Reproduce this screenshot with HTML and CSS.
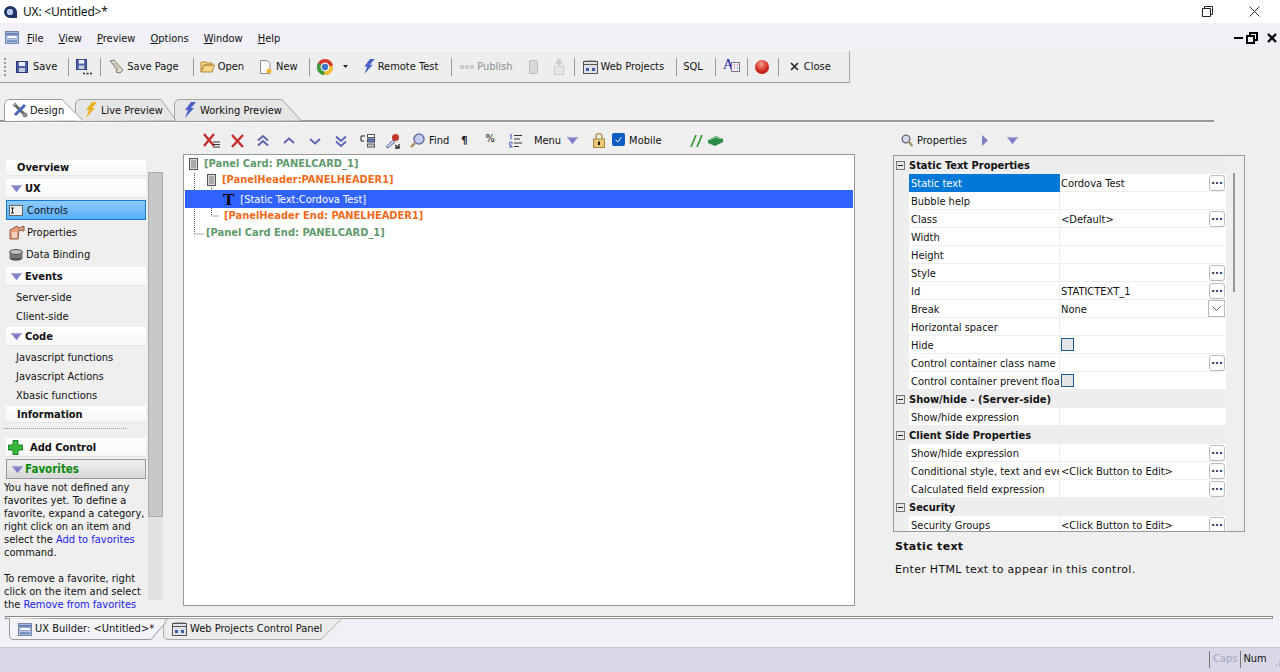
FILE: index.html
```html
<!DOCTYPE html>
<html lang="en">
<head>
<meta charset="UTF-8">
<title>UX: &lt;Untitled&gt;*</title>
<link rel="stylesheet" href="styles.css">
</head>
<body>
<svg class="defs" width="0" height="0">
	<symbol id="tri" viewBox="0 0 11 7"><path d="M0 0H11L5.5 7Z" fill="#7c7cc4" stroke="#9a9ad8" stroke-width=".5"/><path d="M1.5 .8H9.5" stroke="#b4b4e4"/></symbol>
	<symbol id="web" viewBox="0 0 15 14"><rect x=".5" y="1.5" width="14" height="12" fill="#dfe2ea" stroke="#555"/><path d="M1 4.5H14" stroke="#555"/><path d="M3 1V0H7V1M8 1V0H12V1" fill="none" stroke="#888"/><rect x="3" y="8" width="3" height="3" fill="#3c5ca8"/><rect x="9" y="8" width="3" height="3" fill="#3c5ca8"/></symbol>
	<symbol id="ux" viewBox="0 0 15 14"><rect x=".5" y=".5" width="14" height="13" fill="#b7c6e6" stroke="#6f80a8"/><path d="M1 3H14" stroke="#5e78b4" stroke-width="2"/><rect x="2" y="5" width="11" height="3" fill="#fff" stroke="#7486b4" stroke-width=".7"/><path d="M2 11H13" stroke="#6c84bc" stroke-width="2"/></symbol>
	<symbol id="save" viewBox="0 0 12 12"><rect x=".5" y=".5" width="11" height="11" fill="#4a5fa8" stroke="#2a3a78"/><rect x="3" y="1" width="6" height="4" fill="#eef"/><rect x="3" y="7" width="6" height="4" fill="#c8cce0"/></symbol>
	<symbol id="bolt" viewBox="0 0 12 16"><path d="M7 0H12L7 6H10L1 16L4 8H1Z"/></symbol>
	<symbol id="panel" viewBox="0 0 9 12"><rect x=".5" y=".5" width="8" height="11" fill="#d8d8d8" stroke="#555"/><rect x="2" y="2" width="5" height="8" fill="#aaa"/></symbol>
</svg>

<div class="titlebar">
	<svg class="app-logo" width="14" height="12" viewBox="0 0 14 12"><path fill-rule="evenodd" d="M7 0A6 6 0 1 0 7 12H14V6A7 6 0 0 0 7 0ZM7 3A3 3 0 1 1 7 9A3 3 0 1 1 7 3Z" fill="#1c3468"/><circle cx="7" cy="6" r="3" fill="#b8c8e8"/></svg>
	<span class="title">UX: &lt;Untitled&gt;*</span>
	<svg class="win-restore" width="11" height="11" viewBox="0 0 11 11"><path d="M2.5 2.5V.5H10.500V8.500H8.500M.5 2.500H8.500V10.500H.5Z" fill="none" stroke="#222"/></svg>
	<svg class="win-close" width="11" height="11" viewBox="0 0 11 11"><path d="M.5 .5L10.500 10.500M10.500 .5L.5 10.500" stroke="#333"/></svg>
</div>

<div class="menubar">
	<svg class="menu-icon" width="14" height="13"><use href="#ux"/></svg>
	<span class="menu-item"><u>F</u>ile</span>
	<span class="menu-item"><u>V</u>iew</span>
	<span class="menu-item"><u>P</u>review</span>
	<span class="menu-item"><u>O</u>ptions</span>
	<span class="menu-item"><u>W</u>indow</span>
	<span class="menu-item"><u>H</u>elp</span>
	<div class="mdi-btns">
		<span class="mdi-min"></span>
		<svg width="12" height="12" viewBox="0 0 12 12"><path d="M4 3V1H11V8H8.500M1 4H8V11H1Z" fill="none" stroke="#000" stroke-width="2"/></svg>
		<svg class="mdi-x" width="10" height="10" viewBox="0 0 10 10"><path d="M1 1L9 9M9 1L1 9" stroke="#000" stroke-width="2.400"/></svg>
	</div>
</div>

<div class="toolbar">
	<span class="grip"></span>
	<span class="tool t-save"><svg width="12" height="12"><use href="#save"/></svg>Save</span>
	<span class="sep"></span>
	<span class="tool t-saveas"><svg width="16" height="16" viewBox="0 0 16 16"><use href="#save" width="11" height="11"/><path d="M7 14.500H9M10.500 14.500H12.500M14 14.500H16" stroke="#223" stroke-width="1.500"/></svg></span>
	<span class="sep"></span>
	<span class="tool t-page"><svg width="15" height="15" viewBox="0 0 15 15"><path d="M1 2L5 1L14 11L11 14L7 13L8 11L3 4Z" fill="#e4e0d0" stroke="#77756a"/><path d="M5 4L10 10M4 6L9 12" stroke="#99978a"/></svg>Save Page</span>
	<span class="sep"></span>
	<span class="tool t-open"><svg width="15" height="13" viewBox="0 0 15 13"><path d="M1 12V2H6L7 3H12V5H4L1 12L4 5H14.500L12 12Z" fill="#f4d68a" stroke="#b08a38"/></svg>Open</span>
	<span class="tool t-new"><svg width="12" height="14" viewBox="0 0 12 14"><path d="M.5 .5H7L10 3.500V13.500H.5Z" fill="#fafafa" stroke="#8a8a98"/><circle cx="9" cy="11" r="2.500" fill="#f0b830"/></svg>New</span>
	<span class="sep"></span>
	<span class="tool t-chrome"><svg width="16" height="16" viewBox="0 0 16 16"><circle cx="8" cy="8" r="8" fill="#d9342c"/><path d="M8 8L15.900 6.800A8 8 0 0 1 7 16Z" fill="#f4c430"/><path d="M8 8L7 16A8 8 0 0 1 1 3.800Z" fill="#3c9c3c"/><circle cx="8" cy="8" r="3.800" fill="#3f76c8" stroke="#eee" stroke-width="1.300"/></svg></span>
	<svg class="caret" width="5" height="3" viewBox="0 0 5 3"><path d="M0 0H5L2.500 3Z" fill="#222"/></svg>
	<span class="tool t-remote"><svg class="bolt-blue" width="12" height="15"><use href="#bolt"/></svg>Remote Test</span>
	<span class="sep"></span>
	<span class="tool t-publish off"><span class="dots3"></span>Publish</span>
	<svg class="t-phone" width="9" height="14" viewBox="0 0 9 14"><rect x=".5" y=".5" width="8" height="13" rx="1.500" fill="#d8d8d8" stroke="#bbb"/></svg>
	<svg class="t-upl" width="10" height="16" viewBox="0 0 10 16"><path d="M3 0H7V3H9L5 7L1 3H3Z" fill="#ccc"/><rect x=".5" y="7.500" width="9" height="8" fill="#e6e6e6" stroke="#ccc"/></svg>
	<span class="sep"></span>
	<span class="tool t-web"><svg width="15" height="14"><use href="#web"/></svg>Web Projects</span>
	<span class="sep"></span>
	<span class="tool t-sql">SQL</span>
	<span class="sep"></span>
	<span class="tool t-style"><span class="big-a">A</span><svg width="9" height="10" viewBox="0 0 9 10"><rect x=".5" y=".5" width="8" height="9" fill="#eef" stroke="#778"/><path d="M3 3H4M6 3H7M3 6H4" stroke="#d33"/><path d="M6 6H7" stroke="#2a4"/></svg></span>
	<span class="sep"></span>
	<span class="ball"></span>
	<span class="sep"></span>
	<span class="tool t-close"><svg width="9" height="9" viewBox="0 0 9 9"><path d="M1 1L8 8M8 1L1 8" stroke="#222" stroke-width="1.600"/></svg>Close</span>
</div>

<div class="tabstrip">
	<div class="tab tab-design">
		<svg class="tab-bg" width="80" height="22" viewBox="0 0 80 22"><path d="M.5 22V6Q.5 .5 6 .5H58L79 21.500" fill="#fff" stroke="#9a9a9a"/></svg>
		<svg class="tab-ic" width="16" height="16" viewBox="0 0 16 16"><path d="M3 3L13 13" stroke="#666" stroke-width="3"/><path d="M13 3L3 13" stroke="#4766b8" stroke-width="3"/><path d="M1 4L4 1" stroke="#999" stroke-width="2"/><circle cx="13" cy="13" r="2.500" fill="#888"/></svg><span>Design</span>
	</div>
	<div class="tab tab-live">
		<svg class="tab-bg" width="102" height="22" viewBox="0 0 102 22"><path d="M.5 22V6Q.5 .5 6 .5H86L101 21.500" fill="#e6e6e6" stroke="#a4a4a4"/></svg>
		<svg class="tab-ic bolt-yellow" width="12" height="16"><use href="#bolt"/></svg><span>Live Preview</span>
	</div>
	<div class="tab tab-working">
		<svg class="tab-bg" width="128" height="22" viewBox="0 0 128 22"><path d="M.5 22V6Q.5 .5 6 .5H108L127 21.500" fill="#e6e6e6" stroke="#a4a4a4"/></svg>
		<svg class="tab-ic bolt-blue" width="12" height="16"><use href="#bolt"/></svg><span>Working Preview</span>
	</div>
</div>

<div class="main">
	<div class="left">
		<div class="nav">
			<div class="nav-head h-over">Overview</div>
			<div class="nav-head h-tall"><svg width="11" height="7"><use href="#tri"/></svg>UX</div>
			<div class="nav-sel"><svg width="14" height="11" viewBox="0 0 14 11"><rect x=".5" y=".5" width="13" height="10" fill="#eee" stroke="#666"/><path d="M2 3H5M2 8H5M3.500 3V8" stroke="#222"/></svg>Controls</div>
			<div class="nav-item ic-props"><svg width="16" height="15" viewBox="0 0 16 15"><path d="M1 5L8 1L10 3L15 1V6L10 5L9 14H1Z" fill="#e8a078" stroke="#885c50"/><path d="M3 8H8M3 10H8M3 12H8" stroke="#fff"/></svg>Properties</div>
			<div class="nav-item ic-data"><svg width="14" height="12" viewBox="0 0 14 12"><ellipse cx="7" cy="9" rx="6.500" ry="2.800" fill="#555"/><rect x=".5" y="3" width="13" height="6" fill="#777"/><ellipse cx="7" cy="3" rx="6.500" ry="2.500" fill="#bbb" stroke="#555"/></svg>Data Binding</div>
			<div class="nav-head h-tall"><svg width="11" height="7"><use href="#tri"/></svg>Events</div>
			<div class="nav-link first">Server-side</div>
			<div class="nav-link">Client-side</div>
			<div class="nav-head h-tall"><svg width="11" height="7"><use href="#tri"/></svg>Code</div>
			<div class="nav-link first">Javascript functions</div>
			<div class="nav-link">Javascript Actions</div>
			<div class="nav-link">Xbasic functions</div>
			<div class="nav-head h-over h-info">Information</div>
			<div class="dotted"></div>
			<div class="nav-head h-add"><svg width="15" height="15" viewBox="0 0 15 15"><path d="M5 .5H10V5H14.500V10H10V14.500H5V10H.5V5H5Z" fill="#38b838" stroke="#1c7c2c"/></svg>Add Control</div>
			<div class="nav-fav"><svg width="11" height="7"><use href="#tri"/></svg>Favorites</div>
			<p class="fav-text">You have not defined any<br>favorites yet. To define a<br>favorite, expand a category,<br>right click on an item and<br>select the <span class="link">Add to favorites</span><br>command.</p>
			<p class="fav-text fav-gap">To remove a favorite, right<br>click on the item and select<br>the <span class="link">Remove from favorites</span></p>
		</div>
		<div class="nav-scroll"><div class="nav-thumb"></div></div>
	</div>

	<div class="center">
		<div class="edit-tools">
			<svg class="e1" width="17" height="16" viewBox="0 0 17 16"><path d="M1 1L11 13M11 1L1 13" stroke="#c4302c" stroke-width="2.400"/><path d="M10 9H17M10 11.500H17M10 14H17" stroke="#333"/></svg>
			<svg class="e2" width="13" height="14" viewBox="0 0 13 14"><path d="M1 1L12 13M12 1L1 13" stroke="#c4302c" stroke-width="2.400"/></svg>
			<svg class="e3" width="12" height="12" viewBox="0 0 12 12"><path d="M1 5.500L6 1L11 5.500M1 10.500L6 6L11 10.500" fill="none" stroke="#5c62b4" stroke-width="1.800"/></svg>
			<svg class="e3" width="12" height="12" viewBox="0 0 12 12"><path d="M1 8L6 3.500L11 8" fill="none" stroke="#5c62b4" stroke-width="1.800"/></svg>
			<svg class="e3" width="12" height="12" viewBox="0 0 12 12"><path d="M1 4L6 8.500L11 4" fill="none" stroke="#5c62b4" stroke-width="1.800"/></svg>
			<svg class="e3" width="12" height="12" viewBox="0 0 12 12"><path d="M1 1.500L6 6L11 1.500M1 6.500L6 11L11 6.500" fill="none" stroke="#5c62b4" stroke-width="1.800"/></svg>
			<svg class="e4" width="15" height="14" viewBox="0 0 15 14"><rect x="7.500" y=".5" width="7" height="3" fill="#fff" stroke="#555"/><rect x="7.500" y="5" width="7" height="3" fill="#5c7cc4" stroke="#446"/><rect x="7.500" y="10" width="7" height="3" fill="#ccc" stroke="#555"/><path d="M5 2H1V7H4" fill="none" stroke="#222"/></svg>
			<svg class="e5" width="16" height="16" viewBox="0 0 16 16"><path d="M2 14L9 7L11 9L4 15Z" fill="#cbd4ec" stroke="#5a6aa0"/><circle cx="11.500" cy="4.500" r="3.500" fill="#c4382c"/><path d="M11 12L15 15M15 11V15H11" fill="none" stroke="#222" stroke-width="1.300"/></svg>
			<svg class="e6" width="15" height="15" viewBox="0 0 15 15"><circle cx="9" cy="6" r="5" fill="#c4ccec" stroke="#6670a8" stroke-width="1.500"/><path d="M5 10L1 14" stroke="#a88858" stroke-width="2.400"/></svg>
			<span class="e-text e-find">Find</span>
			<span class="e-pil">¶</span>
			<span class="e-pct">%</span>
			<svg class="e-list" width="14" height="14" viewBox="0 0 14 14"><path d="M2 1L3 .5V5.500M1 13H4L1.500 10Q1.500 8 3 8T4 10" fill="none" stroke="#5c6cc8" stroke-width="1.200"/><path d="M6 1.500H14M6 5H12M6 9H14M6 12.500H11" stroke="#333"/></svg>
			<span class="e-text e-menu">Menu</span>
			<svg class="e-tri" width="11" height="7"><use href="#tri"/></svg>
			<svg class="e-lock" width="12" height="15" viewBox="0 0 12 15"><path d="M3 6V3.500A3 3 0 0 1 9 3.500V6" fill="none" stroke="#b89850" stroke-width="1.500"/><rect x=".5" y="6" width="11" height="8.500" fill="#eac878" stroke="#a88838"/><rect x="5" y="8.500" width="2" height="3.500" fill="#222"/></svg>
			<span class="e-check"><svg width="13" height="13" viewBox="0 0 13 13"><path d="M3.500 6.500L5.800 9L9.500 4" fill="none" stroke="#fff"/></svg></span>
			<span class="e-text e-mobile">Mobile</span>
			<svg class="e-slash" width="13" height="12" viewBox="0 0 13 12"><path d="M1 12L6 0M7 12L12 0" stroke="#2a9a28" stroke-width="1.600"/></svg>
			<svg class="e-book" width="15" height="10" viewBox="0 0 15 10"><path d="M0 4L8 0L15 3V6L7 10L0 7Z" fill="#2f8a48"/><path d="M1 4L8 1L13 3" fill="none" stroke="#a4dcb0"/></svg>
		</div>
		<div class="tree">
			<svg class="tree-lines" width="60" height="90" viewBox="0 0 60 90"><path d="M9.500 17V78H19M26.500 32V60H34" fill="none" stroke="#555" stroke-dasharray="1 1"/></svg>
			<div class="row row-card first-row"><svg width="9" height="12"><use href="#panel"/></svg>[Panel Card: PANELCARD_1]</div>
			<div class="row row-head ind-head"><svg width="9" height="12"><use href="#panel"/></svg>[PanelHeader:PANELHEADER1]</div>
			<div class="row row-sel"><span class="big-t">T</span>[Static Text:Cordova Test]</div>
			<div class="row row-head ind-head-end">[PanelHeader End: PANELHEADER1]</div>
			<div class="row row-card ind-card-end">[Panel Card End: PANELCARD_1]</div>
		</div>
	</div>

	<div class="right">
		<div class="prop-tools">
			<svg width="12" height="13" viewBox="0 0 12 13"><circle cx="5" cy="5" r="3.800" fill="#d4dcec" stroke="#667" stroke-width="1.300"/><path d="M8 8L11.500 12" stroke="#a88858" stroke-width="2"/></svg>
			<span class="p-label">Properties</span>
			<svg class="p-right" width="6" height="11" viewBox="0 0 6 11"><path d="M0 0L6 5.500L0 11Z" fill="#7c7cc4"/></svg>
			<svg class="p-down" width="11" height="7"><use href="#tri"/></svg>
		</div>
		<div class="props">
			<div class="prop-list">
				<div class="group"><span class="minus"></span>Static Text Properties</div>
				<div class="prop"><span class="name name-sel">Static text</span><span class="val">Cordova Test</span><span class="more">...</span></div>
				<div class="prop"><span class="name">Bubble help</span><span class="val"></span></div>
				<div class="prop"><span class="name">Class</span><span class="val">&lt;Default&gt;</span><span class="more">...</span></div>
				<div class="prop"><span class="name">Width</span><span class="val"></span></div>
				<div class="prop"><span class="name">Height</span><span class="val"></span></div>
				<div class="prop"><span class="name">Style</span><span class="val"></span><span class="more">...</span></div>
				<div class="prop"><span class="name">Id</span><span class="val">STATICTEXT_1</span><span class="more">...</span></div>
				<div class="prop"><span class="name">Break</span><span class="val">None</span><span class="drop"><svg width="9" height="5" viewBox="0 0 9 5"><path d="M.5 .5L4.500 4.500L8.500 .5" fill="none" stroke="#555"/></svg></span></div>
				<div class="prop"><span class="name">Horizontal spacer</span><span class="val"></span></div>
				<div class="prop"><span class="name">Hide</span><span class="val"><span class="box"></span></span></div>
				<div class="prop"><span class="name">Control container class name</span><span class="val"></span><span class="more">...</span></div>
				<div class="prop"><span class="name">Control container prevent float</span><span class="val"><span class="box"></span></span></div>
				<div class="group"><span class="minus"></span>Show/hide - (Server-side)</div>
				<div class="prop"><span class="name">Show/hide expression</span><span class="val"></span></div>
				<div class="group"><span class="minus"></span>Client Side Properties</div>
				<div class="prop"><span class="name">Show/hide expression</span><span class="val"></span><span class="more">...</span></div>
				<div class="prop"><span class="name">Conditional style, text and events</span><span class="val">&lt;Click Button to Edit&gt;</span><span class="more">...</span></div>
				<div class="prop"><span class="name">Calculated field expression</span><span class="val"></span><span class="more">...</span></div>
				<div class="group"><span class="minus"></span>Security</div>
				<div class="prop"><span class="name">Security Groups</span><span class="val">&lt;Click Button to Edit&gt;</span><span class="more">...</span></div>
			</div>
			<div class="prop-scroll"><div class="prop-thumb"></div></div>
		</div>
		<div class="help">
			<div class="help-title">Static text</div>
			<div class="help-text">Enter HTML text to appear in this control.</div>
		</div>
	</div>
</div>

<div class="doc-tabs">
	<div class="doc-line"></div>
	<div class="doc-row">
		<div class="doc-tab doc-active">
			<svg class="tab-bg" width="158" height="22" viewBox="0 0 158 22"><path d="M.5 0V17Q.5 21.500 5 21.500H142L157 4" fill="#f4f4f8" stroke="#999"/></svg>
			<svg width="14" height="13"><use href="#ux"/></svg><span>UX Builder: &lt;Untitled&gt;*</span>
		</div>
		<div class="doc-tab doc-other">
			<svg class="tab-bg" width="180" height="22" viewBox="0 0 180 22"><path d="M.5 8Q.5 .5 8 .5H179L158 21.500H5Q.5 21.500 .5 17Z" fill="#ececec" stroke="#aaa"/></svg>
			<svg width="15" height="14"><use href="#web"/></svg><span>Web Projects Control Panel</span>
		</div>
	</div>
</div>

<div class="statusbar">
	<span class="st-sep"></span><span class="st-caps">Caps</span>
	<span class="st-sep"></span><span class="st-num">Num</span>
	<svg class="st-grip" width="10" height="10" viewBox="0 0 10 10"><path d="M8 1H10M5 4H7M8 4H10M2 7H4M5 7H7M8 7H10" stroke="#888" stroke-dasharray="1 1"/></svg>
</div>
</body>
</html>
```

FILE: styles.css
```css
* {
	box-sizing: border-box;
}

html, body {
	margin: 0;
	height: 672px;
	overflow: hidden;
}

body {
	background: #efefef;
	color: #111;
	font-family: "DejaVu Sans Condensed", "Noto Sans", sans-serif;
	font-size: 11px;
	line-height: 14px;
}

svg {
	display: block;
	flex: none;
}

.defs {
	position: absolute;
}

.bolt-blue { color: #4a62c8; fill: #4a62c8; }
.bolt-yellow { color: #e8b020; fill: #e8b020; }

/* window title */
.titlebar {
	display: flex;
	align-items: center;
	height: 23px;
	padding-left: 3px;
	background: #fff;
}

.title {
	margin-left: 6px;
	font-family: "Noto Sans", sans-serif;
	font-size: 12px;
	letter-spacing: -.2px;
}

.win-restore {
	margin-left: auto;
}

.win-close {
	margin: 0 20px 0 36px;
}

/* menu */
.menubar {
	display: flex;
	align-items: center;
	height: 28px;
	padding: 0 3px 0 5px;
	background: #f0f0f6;
}

.menu-item {
	margin-left: 9px;
	margin-right: 6px;
	padding-top: 3px;
}

.menu-icon + .menu-item {
	margin-left: 8px;
}

.mdi-btns {
	display: flex;
	align-items: center;
	gap: 3px;
	margin-left: auto;
	padding-top: 2px;
}

.mdi-min {
	width: 9px;
	height: 2px;
	background: #000;
}

.mdi-x {
	margin-left: 6px;
}

/* main toolbar */
.toolbar {
	display: flex;
	align-items: center;
	width: 850px;
	height: 32px;
	background: #eeeeee;
	border-right: 1px solid #aaa;
	border-bottom: 1px solid #999;
	box-shadow: 0 -1px 0 #f8f8f8;
}

.grip {
	width: 2px;
	height: 18px;
	margin-left: 4px;
	border-left: 2px dotted #999;
}

.sep {
	flex: none;
	width: 1px;
	height: 18px;
	background: #999;
}

.tool {
	display: flex;
	align-items: center;
	gap: 5px;
	white-space: nowrap;
}

.t-save { margin: 0 11px 0 10px; }
.t-saveas { margin: 0 8px 0 7px; }
.t-page { margin: 0 14px 0 8px; gap: 3px; }
.t-open { margin: 0 16px 0 6px; gap: 3px; }
.t-new { margin: 0 11px 0 0; gap: 4px; }
.t-chrome { margin: 0 10px 0 7px; }
.caret { margin-right: 15px; }
.t-remote { margin-right: 13px; gap: 3px; }
.t-publish { margin: 0 16px 0 8px; gap: 3px; }
.t-phone { margin-right: 16px; }
.t-upl { margin-right: 10px; }
.t-web { margin: 0 12px 0 8px; gap: 3px; }
.t-sql { margin: 0 12px 0 6px; }
.t-style { margin: 0 7px 0 7px; gap: 0; }
.t-close { margin-left: 11px; gap: 5px; }

.off {
	color: #8c8c8c;
}

.dots3 {
	width: 14px;
	height: 4px;
	background: repeating-linear-gradient(90deg, #ccc 0 4px, transparent 4px 5px);
}

.big-a {
	color: #1a22a8;
	font-family: "Liberation Serif", serif;
	font-size: 15px;
	margin-top: -5px;
	width: 8px;
}

.ball {
	flex: none;
	width: 14px;
	height: 14px;
	margin: 0 9px 0 7px;
	border-radius: 50%;
	background: radial-gradient(circle at 45% 30%, #f4a090, #d0281c 55%, #98180f);
}

/* design tabs */
.tabstrip {
	display: flex;
	align-items: flex-end;
	height: 39px;
	width: 1214px;
	padding-left: 4px;
	border-bottom: 2px solid #999;
	box-shadow: 0 1px 0 #f8f8f8;
}

.tab {
	position: relative;
	display: flex;
	align-items: center;
	height: 22px;
	margin-bottom: -1px;
	white-space: nowrap;
}

.tab > * {
	position: relative;
}

.tab span {
	padding-top: 1px;
}

.tab .tab-bg {
	position: absolute;
	left: 0;
	top: 0;
}

.tab-design {
	z-index: 3;
	width: 71px;
	padding-left: 8px;
	gap: 2px;
}

.tab-live {
	width: 99px;
	padding-left: 10px;
	gap: 4px;
	z-index: 2;
}

.tab-working {
	width: 128px;
	padding-left: 10px;
	gap: 4px;
	z-index: 1;
}

/* body columns */
.main {
	display: flex;
	height: 493px;
}

.left {
	display: flex;
	width: 183px;
	padding: 38px 0 0 3px;
}

.nav {
	width: 143px;
	padding-left: 3px;
	overflow: hidden;
	height: 452px;
}

.nav-head {
	display: flex;
	align-items: center;
	gap: 3px;
	height: 18px;
	margin-bottom: 3px;
	padding: 1px 0 0 5px;
	background: linear-gradient(#fff, #f7f7f7);
	font-weight: 700;
	box-shadow: 0 1px 0 #e6e6e6;
}

.nav-head svg {
	margin-top: -1px;
}

.h-over {
	height: 15px;
	padding-left: 11px;
	margin-bottom: 4px;
}

.h-info {
	height: 16px;
	margin: 0;
}

.h-add {
	padding-left: 2px;
	gap: 7px;
}

.nav-sel {
	display: flex;
	align-items: center;
	gap: 4px;
	height: 20px;
	padding: 1px 0 0 2px;
	background: linear-gradient(#8fcbff, #5ab0fa);
	border: 1px solid #1478d4;
	margin-bottom: 1px;
}

.nav-item {
	display: flex;
	align-items: center;
	gap: 2px;
	height: 22px;
	padding: 1px 0 0 3px;
}

.ic-data { gap: 3px; margin-bottom: 2px; }

.nav-link {
	height: 19px;
	padding: 4px 0 0 10px;
}

.nav-link.first {
	margin-top: -1px;
}

.nav-link + .nav-head {
	margin-top: 2px;
}

.nav-link + .h-info {
	margin-top: 2px;
}

.dotted {
	width: 122px;
	margin: 6px 0 9px -2px;
	border-top: 1px dotted #999;
}

.nav-fav {
	display: flex;
	align-items: center;
	gap: 2px;
	height: 20px;
	padding-left: 5px;
	margin-bottom: 2px;
	color: #0a8a0a;
	font-size: 11.5px;
	font-weight: 700;
	background: linear-gradient(#efefef, #d8d8d8);
	border: 1px solid #999;
}

.fav-text {
	margin: 0 0 0 -2px;
	line-height: 13px;
	white-space: nowrap;
}

.fav-gap {
	margin-top: 13px;
}

.link {
	color: #2222ee;
}

.nav-scroll {
	width: 15px;
	height: 428px;
	margin: 12px 0 0 2px;
	background: #e2e2e2;
}

.nav-thumb {
	height: 345px;
	background: #c8c8c8;
	border: 1px solid #aaa;
}

.center {
	width: 672px;
}

.edit-tools {
	display: flex;
	align-items: center;
	height: 32px;
	padding: 5px 0 0 20px;
}

.e2 { margin-left: 11px; }
.e3 { margin-left: 14px; }
.e2 + .e3 { margin-left: 13px; }
.e4 { margin-left: 13px; }
.e5 { margin-left: 9px; }
.e6 { margin-left: 10px; }
.e-find { margin-left: 4px; }
.e-pil { margin-left: 12px; font-weight: 700; }
.e-pct { margin: -4px 0 0 18px; }
.e-list { margin-left: 13px; }
.e-menu { margin-left: 12px; }
.e-tri { margin-left: 6px; }
.e-lock { margin-left: 15px; }
.e-check { flex: none; margin: -2px 0 0 7px; width: 13px; height: 13px; border-radius: 2px; background: #0a5cc0; }
.e-mobile { margin: 1px 0 0 4px; }
.e-slash { margin-left: 28px; }
.e-book { margin-left: 5px; }

.tree {
	position: relative;
	height: 452px;
	background: #fff;
	border: 1px solid #999;
	font-weight: 700;
}

.tree-lines {
	position: absolute;
	left: 1px;
	top: 1px;
}

.row {
	position: relative;
	display: flex;
	align-items: center;
	gap: 6px;
	padding-top: 1px;
	white-space: nowrap;
}

.row-card { color: #5f9a6c; height: 16px; }
.row-head { color: #f26a1c; height: 16px; }

.first-row { padding-left: 5px; }
.ind-head { padding-left: 23px; margin-bottom: 3px; }
.ind-head-end { padding-left: 40px; margin-top: -1px; height: 17px; }
.ind-card-end { padding-left: 22px; height: 17px; }

.row-sel {
	height: 18px;
	margin: 0 1px;
	padding-left: 38px;
	gap: 6px;
	background: #2f62ff;
	color: #fff;
	font-weight: 400;
}

.big-t {
	color: #000;
	font-family: "Liberation Serif", serif;
	font-size: 17px;
	font-weight: 700;
}

/* properties */
.right {
	width: 352px;
	margin-left: 38px;
}

.prop-tools {
	display: flex;
	align-items: center;
	height: 33px;
	padding: 3px 0 0 8px;
}

.p-label { margin: 1px 0 0 4px; }
.p-right { margin-left: 15px; }
.p-down { margin-left: 19px; }

.props {
	display: flex;
	height: 377px;
	background: #efefef;
	border: 1px solid #999;
	overflow: hidden;
}

.prop-list {
	width: 332px;
}

.group {
	display: flex;
	align-items: center;
	height: 18px;
	padding-top: 1px;
	font-weight: 700;
	background: #eee;
}

.minus {
	position: relative;
	width: 9px;
	height: 9px;
	margin: -1px 4px 0 2px;
	background: #e8e8e8;
	border: 1px solid #777;
}

.minus::after {
	content: "";
	position: absolute;
	left: 1px;
	top: 3px;
	width: 5px;
	height: 1px;
	background: #222;
}

.prop {
	position: relative;
	display: flex;
	height: 18px;
	padding-left: 15px;
	background: linear-gradient(90deg, #eee 15px, #fff 15px);
}

.name {
	width: 151px;
	padding: 3px 0 0 2px;
	overflow: hidden;
	white-space: nowrap;
	border-bottom: 1px solid #eee;
	border-right: 1px solid #eee;
}

.name-sel {
	background: #0078d7;
	color: #fff;
	border: 0;
}

.val {
	flex: 1;
	padding: 3px 0 0 1px;
	border-bottom: 1px solid #eee;
	white-space: nowrap;
}

.val .box {
	margin-top: -1px;
}

.more {
	position: absolute;
	right: 1px;
	top: 1px;
	width: 16px;
	height: 16px;
	background: #fff;
	border: 1px solid #bbb;
	border-radius: 3px;
	text-align: center;
	font-weight: 700;
	color: #225;
	line-height: 9px;
}

.drop {
	position: absolute;
	right: 1px;
	top: 0;
	display: flex;
	align-items: center;
	justify-content: center;
	width: 17px;
	height: 17px;
	border: 1px solid #bbb;
	background: #fff;
}

.box {
	display: block;
	width: 13px;
	height: 13px;
	background: #e4e4e4;
	border: 1px solid #1f5a8c;
}

.prop-scroll {
	flex: 1;
	padding: 17px 0 0 7px;
	background: #efefef;
}

.prop-thumb {
	width: 2px;
	height: 119px;
	background: #999;
}

.help {
	padding: 8px 0 0 2px;
	font-family: "DejaVu Sans", sans-serif;
	font-size: 11px;
	letter-spacing: .3px;
}

.help-title {
	font-weight: 700;
	margin-bottom: 9px;
}

/* open documents */
.doc-tabs {
	height: 32px;
	background: #f0f0f6;
	padding: 1px 0 0 5px;
}

.doc-line {
	width: 1268px;
	height: 3px;
	border: 1px solid #888;
	border-bottom-color: #999;
	background: #fff;
}

.doc-row {
	display: flex;
	margin-top: -1px;
	padding-left: 4px;
}

.doc-tab {
	position: relative;
	display: flex;
	align-items: center;
	gap: 3px;
	height: 22px;
	white-space: nowrap;
}

.doc-tab > * {
	position: relative;
}

.doc-tab .tab-bg {
	position: absolute;
	left: 0;
	top: 0;
}

.doc-active {
	width: 154px;
	padding-left: 9px;
	z-index: 1;
}

.doc-other {
	width: 180px;
	padding-left: 9px;
}

.statusbar {
	display: flex;
	align-items: center;
	height: 25px;
	padding: 0 0 2px 1209px;
	background: #d8d8e6;
	border-top: 1px solid #c4c4d4;
}

.st-sep {
	flex: none;
	width: 1px;
	height: 17px;
	background: #777;
}

.st-caps {
	margin: 0 3px;
	width: 26px;
	color: #a6a6c0;
}

.st-num {
	margin-left: 2px;
}

.st-grip {
	margin-left: 7px;
	margin-top: 8px;
}
```
